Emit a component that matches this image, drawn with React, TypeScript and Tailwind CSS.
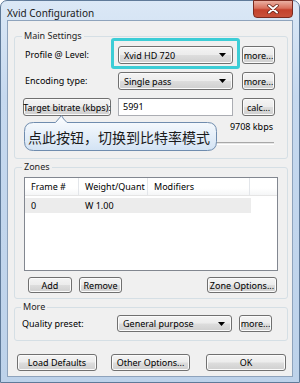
import type { ReactNode } from "react";

const btnBase =
  "flex items-center rounded-[3px] border border-[#707070] bg-[linear-gradient(#f4f4f4,#ececec_48%,#dddddd_52%,#cfcfcf)] shadow-[inset_0_0_0_1px_#fbfbfb] leading-none whitespace-nowrap";

function Button({ className, children }: { className: string; children: ReactNode }) {
  return <div className={`${btnBase} justify-center ${className}`}>{children}</div>;
}

function Combo({ value, className }: { value: string; className: string }) {
  return (
    <div className={`${btnBase} justify-between pl-[5px] pr-[6px] ${className}`}>
      <span>{value}</span>
      <svg width="7" height="4" viewBox="0 0 7 4">
        <path d="M0 0h7L3.5 4z" fill="#000" />
      </svg>
    </div>
  );
}

function Group({
  title,
  className,
  legendClass,
  children,
}: {
  title: string;
  className: string;
  legendClass: string;
  children: ReactNode;
}) {
  return (
    <fieldset className={`ml-[6px] w-[274px] rounded-[3px] border border-[#d5dfe5] ${className}`}>
      <legend className={`px-[2px] leading-[14px] text-[#1e1e1e] ${legendClass}`}>{title}</legend>
      {children}
    </fieldset>
  );
}

function Balloon() {
  return (
    <div className="absolute left-[-2px] top-[-7px] h-[38px] w-[195px]">
      <svg width="195" height="38" viewBox="0 0 195 38" className="absolute left-0 top-0">
        <defs>
          <linearGradient id="bg" x1="0" y1="0" x2="0" y2="1">
            <stop offset="0" stopColor="#fdfeff" />
            <stop offset="1" stopColor="#d3e3f4" />
          </linearGradient>
        </defs>
        <path
          d="M10.5 8.5H32.5L38.5 1.5Q40 5 44 8.5H184.5Q193.5 8.5 193.5 17.5V27.5Q193.5 36.5 184.5 36.5H10.5Q1.5 36.5 1.5 27.5V17.5Q1.5 8.5 10.5 8.5Z"
          fill="url(#bg)"
          stroke="#6f8cae"
        />
      </svg>
      <div className="absolute left-[5px] top-[8px] flex h-[29px] items-center font-['Noto_Sans_CJK_SC',sans-serif] text-[14px] leading-none text-[#1b1b1b]">
        点此按钮，切换到比特率模式
      </div>
    </div>
  );
}

export default function App() {
  return (
    <div className="flex h-[383px] w-[300px] flex-col rounded-t-[7px] border border-[#5f7a99] bg-[linear-gradient(180deg,#dbe8f6,#c6d9ef_25%,#bdd2ea)] font-['Noto_Sans',sans-serif] text-[9px] text-black">
      <div className="flex h-[19px] items-start justify-between">
        <div className="pl-[6px] pt-[6px] text-[10px] leading-[12px] text-[#1a1a1a]">Xvid Configuration</div>
        <div className="mr-[6px] mt-[-1px] flex h-[18px] w-[40px] items-center justify-center rounded-b-[4px] border border-[#7a2a1f] bg-[linear-gradient(#eab0a2,#d8705c_45%,#c4412c_55%,#c8513a)]">
          <svg width="12" height="10" viewBox="0 0 12 10">
            <path d="M2 1.5L10 8.5M10 1.5L2 8.5" stroke="#5a1a10" strokeWidth="3.4" strokeLinecap="round" />
            <path d="M2 1.5L10 8.5M10 1.5L2 8.5" stroke="#fff" strokeWidth="2" strokeLinecap="round" />
          </svg>
        </div>
      </div>

      <div className="mx-[6px] flex h-[357px] flex-col border border-[#8ea3bc] bg-[#f0f0f0]">
        <Group title="Main Settings" className="mt-[8px] h-[130px] px-[10px] pt-[3px]" legendClass="ml-[-3px]">
          <div className="flex h-[18px] items-center">
            <div className="w-[93px]">Profile @ Level:</div>
            <div className="relative">
              <div className="absolute left-[-7px] right-[-7px] top-[-8px] bottom-[-5px] rounded-[3px] border-[3px] border-[#3ccdd6]" />
              <Combo value="Xvid HD 720" className="h-[18px] w-[115px]" />
            </div>
            <Button className="ml-[9px] h-[18px] w-[33px]">more...</Button>
          </div>
          <div className="mt-[8px] flex h-[18px] items-center">
            <div className="w-[93px]">Encoding type:</div>
            <Combo value="Single pass" className="h-[18px] w-[115px]" />
            <Button className="ml-[9px] h-[18px] w-[33px]">more...</Button>
          </div>
          <div className="mt-[8px] flex h-[18px] items-center">
            <Button className="ml-[-2px] h-[18px] w-[88px]">Target bitrate (kbps):</Button>
            <div className="ml-[7px] flex h-[18px] w-[115px] items-center border border-[#abadb3] border-t-[#7a7c80] bg-white pl-[4px]">
              5991
            </div>
            <Button className="ml-[9px] h-[18px] w-[33px]">calc...</Button>
          </div>
          <div className="relative mt-[5px] flex h-[12px] items-center justify-end pr-[4px] leading-[12px]">
            9708 kbps
            <Balloon />
          </div>
          <div className="mx-[3px] mt-[9px] h-[3px] border-y border-t-[#a8a8a8] border-b-white bg-[#e6e6e6]" />
        </Group>

        <Group title="Zones" className="mt-[1px] h-[139px] px-[9px] pt-[3px]" legendClass="ml-[-2px]">
          <div className="h-[94px] border border-[#828790] bg-white">
            <div className="flex h-[18px] border-b border-[#e5e5e5] bg-[linear-gradient(#ffffff,#ffffff_60%,#f5f6f7)]">
              <div className="flex w-[54px] items-center border-r border-[#e3e6ea] pl-[6px]">Frame #</div>
              <div className="flex w-[69px] items-center border-r border-[#e3e6ea] pl-[6px]">Weight/Quant</div>
              <div className="flex w-[102px] items-center border-r border-[#e3e6ea] pl-[6px]">Modifiers</div>
              <div className="flex-1" />
            </div>
            <div className="mt-[2px] flex h-[15px] w-[226px] items-center bg-[#ececec]">
              <div className="w-[54px] pl-[6px]">0</div>
              <div className="w-[69px] pl-[6px]">W 1.00</div>
            </div>
          </div>
          <div className="mt-[6px] flex h-[16px] items-center">
            <Button className="ml-[4px] h-[16px] w-[44px]">Add</Button>
            <Button className="ml-[7px] h-[16px] w-[43px]">Remove</Button>
            <Button className="ml-auto mr-[1px] h-[16px] w-[70px]">Zone Options...</Button>
          </div>
        </Group>

        <Group title="More" className="mt-[1px] h-[41px] px-[7px] pt-[1px]" legendClass="ml-[-1px]">
          <div className="flex h-[17px] items-center">
            <div className="w-[95px]">Quality preset:</div>
            <Combo value="General purpose" className="h-[17px] w-[115px]" />
            <Button className="ml-[7px] h-[17px] w-[33px]">more...</Button>
          </div>
        </Group>

        <div className="ml-[9px] mt-[13px] flex h-[17px] items-center">
          <Button className="h-[17px] w-[80px]">Load Defaults</Button>
          <Button className="ml-[14px] h-[17px] w-[79px]">Other Options...</Button>
          <Button className="ml-[16px] h-[17px] w-[80px] border-[#3c7fb1] bg-[linear-gradient(#f2f8fc,#e3f0f9_48%,#d3e7f4_52%,#c6dff0)] shadow-[inset_0_0_0_1px_#9fe0f5]">
            OK
          </Button>
        </div>
      </div>
    </div>
  );
}
